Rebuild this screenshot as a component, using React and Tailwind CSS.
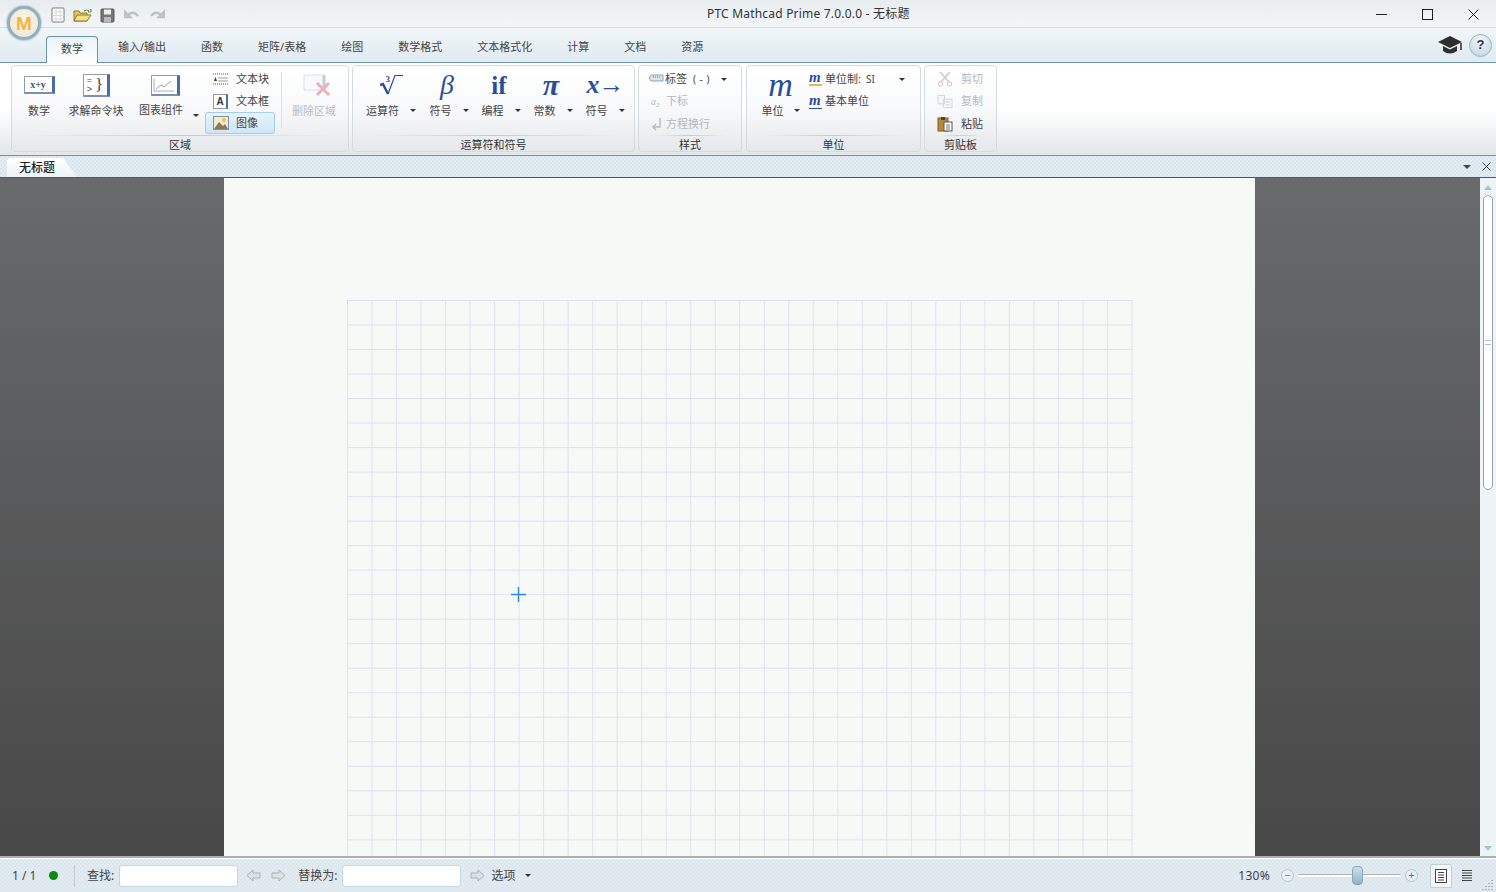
import React from 'react'

const tabs = ['数学', '输入/输出', '函数', '矩阵/表格', '绘图', '数学格式', '文本格式化', '计算', '文档', '资源']

const Caret = ({ color = 'border-t-[#333]' }) => (
    <span className={`inline-block w-0 h-0 border-x-[3px] border-x-transparent border-t-[3px] ${color}`} />
)

/* ribbon group with label at the bottom */
const Group = ({ label, width, children }) => (
    <div className={`${width} h-[87px] flex flex-col rounded-[4px] border border-[#d3dbdf] bg-gradient-to-b from-white via-[#f8f9fa] to-[#e5e9eb]`}>
        <div className="flex-1 flex min-h-0">{children}</div>
        <div className="mx-[16px] h-px bg-gradient-to-r from-transparent via-[#c4ccd0] to-transparent" />
        <div className="h-[15px] text-center text-[11px] leading-[17px] text-[#333]">{label}</div>
    </div>
)

const BigButton = ({ icon, label, caret, iconClass = '', textClass = 'text-[#444]', labelClass = 'gap-[11px]', caretClass = '' }) => (
    <div className="flex flex-col items-center">
        <div className={`h-[32px] flex items-center justify-center ${iconClass}`}>{icon}</div>
        <div className={`h-[18px] flex items-center text-[11px] leading-none whitespace-nowrap ${labelClass} ${textClass}`}>
            <span>{label}</span>
            {caret && <span className={`flex ${caretClass}`}><Caret /></span>}
        </div>
    </div>
)

const SmallRow = ({ icon, label, className = '', iconBox = 'w-[28px]' }) => (
    <div className={`h-[22px] flex items-center text-[11px] whitespace-nowrap ${className}`}>
        <span className={`${iconBox} flex items-center justify-center shrink-0`}>{icon}</span>
        <span>{label}</span>
    </div>
)

const FrameIcon = ({ className, children }) => (
    <div className={`flex items-center justify-center bg-white border border-[#8f9bb0] border-r-[3px] border-r-[#4a6cad] border-b-[2px] border-b-[#7d8fb5] rounded-[1px] ${className}`}>
        {children}
    </div>
)

const MathGlyph = ({ children, className = '' }) => (
    <span className={`font-['Liberation_Serif',serif] text-[#2a4d98] leading-none ${className}`}>{children}</span>
)

const Arrow = ({ flip }) => (
    <svg width="15" height="15" viewBox="0 0 15 15" className={flip ? 'scale-x-[-1]' : ''}>
        <path d="M1 7.5 7 2v3h7v5H7v3z" fill="#dbe2e6" stroke="#a9b3b8" />
    </svg>
)

const App = () => {
    return (
        <div className="relative w-full h-screen overflow-hidden flex flex-col bg-[#e3edf3] text-[#444] font-['Noto_Sans','Noto_Sans_CJK_SC',sans-serif]">

            {/* app logo */}
            <div className="absolute left-[7px] top-[6px] w-[34px] h-[34px] rounded-full border-[3px] border-[#8fb0c2] bg-[radial-gradient(circle_at_50%_40%,#fff6de,#e6e6d8)] flex items-center justify-center shadow-[0_0_2px_#5f7f90] z-20">
                <span className="font-['Liberation_Sans',sans-serif] font-bold text-[19px] leading-none text-[#f3b445]">M</span>
            </div>

            {/* title bar */}
            <div className="h-[28px] shrink-0 flex items-center bg-gradient-to-b from-[#e7ecef] to-[#f3f6f7] border-b border-[#d6dcdf]">
                <div className="w-[707px] pl-[51px] pt-[3px] flex items-center shrink-0">
                    <svg width="14" height="16" viewBox="0 0 14 16" className="mr-[8px]">
                        <rect x="1" y="1" width="12" height="14" rx="1" fill="#fff" stroke="#777" />
                        <path d="M1 5h12M1 8.5h12M1 12h12M5 1v14M9 1v14" stroke="#d5dadd" />
                    </svg>
                    <svg width="19" height="15" viewBox="0 0 19 15" className="mr-[8px]">
                        <path d="M1 3h5l1 2h7v8H1z" fill="#e7c65e" stroke="#8d7a35" />
                        <path d="M1 13 4 7h14l-4 6z" fill="#f7df85" stroke="#8d7a35" />
                        <path d="M11 3q3-2 5 0l-1 1h3V1l-1 1" fill="none" stroke="#5f8f35" />
                    </svg>
                    <svg width="15" height="15" viewBox="0 0 15 15" className="mr-[9px]">
                        <rect x="1" y="1" width="13" height="13" rx="1" fill="#777" stroke="#555" />
                        <rect x="4" y="1.5" width="7" height="5" fill="#eee" />
                        <rect x="4" y="9" width="7" height="5" fill="#bbb" />
                    </svg>
                    <svg width="16" height="12" viewBox="0 0 16 12" className="mr-[9px]">
                        <path d="M4 6q5-5 10 1M1 3v5h5z" fill="none" stroke="#bcc2c5" strokeWidth="2.5" />
                    </svg>
                    <svg width="16" height="12" viewBox="0 0 16 12" className="scale-x-[-1]">
                        <path d="M4 6q5-5 10 1M1 3v5h5z" fill="none" stroke="#bcc2c5" strokeWidth="2.5" />
                    </svg>
                </div>
                <div className="text-[12px] text-[#333] whitespace-nowrap tracking-[0.2px]">PTC Mathcad Prime 7.0.0.0 - 无标题</div>
                <div className="flex-1" />
                <div className="flex items-center pr-[17px] pt-px gap-[35px]">
                    <svg width="11" height="11" viewBox="0 0 11 11"><path d="M0 5.5h11" stroke="#222" /></svg>
                    <svg width="11" height="11" viewBox="0 0 11 11"><rect x=".5" y=".5" width="10" height="10" fill="none" stroke="#222" /></svg>
                    <svg width="11" height="11" viewBox="0 0 11 11"><path d="M.5.5l10 10M10.5.5l-10 10" stroke="#222" /></svg>
                </div>
            </div>

            {/* tab row */}
            <div className="h-[35px] shrink-0 flex items-end pl-[46px] gap-[5px] bg-gradient-to-b from-[#f1f6f8] to-[#dfeaf1] border-b border-[#6f93ab]">
                {tabs.map((tab, index) => (
                    <div
                        key={tab}
                        className={`h-[27px] text-[11px] leading-[24px] whitespace-nowrap text-[#444] ${index === 0 ? 'w-[52px] text-center -mb-px bg-gradient-to-b from-[#eaf2f6] to-white border border-b-0 border-[#6f93ab] rounded-t-[4px]' : 'px-[15px]'}`}
                    >
                        {tab}
                    </div>
                ))}
                <div className="flex-1" />
                <div className="self-center flex items-center pr-[4px] gap-[6px]">
                    <svg width="26" height="22" viewBox="0 0 26 22">
                        <path d="M13 2 25 8l-12 6L1 8z" fill="#2e2e2e" />
                        <path d="M6 12v5q7 5 14 0v-5l-7 3.5z" fill="#2e2e2e" />
                        <path d="M24 9v7" stroke="#2e2e2e" strokeWidth="1.5" />
                    </svg>
                    <div className="w-[23px] h-[23px] rounded-full border border-[#9db3c0] bg-[radial-gradient(circle_at_50%_30%,#f4f8fa,#bcd2df)] flex items-center justify-center font-['Liberation_Sans',sans-serif] font-bold text-[13px] text-[#334]">?</div>
                </div>
            </div>

            {/* ribbon */}
            <div className="h-[92px] shrink-0 flex pl-[11px] pt-[2px] gap-[3px] bg-gradient-to-b from-white via-white to-[#e2e7ea]">
                <Group label="区域" width="w-[338px]">
                    <div className="flex pl-[12px] pt-[3px]">
                        <div className="w-[30px] mr-[14px]">
                            <BigButton icon={<FrameIcon className="w-[31px] h-[18px] font-['Liberation_Serif',serif] font-bold text-[10px] text-[#555]">x+y</FrameIcon>} label="数学" />
                        </div>
                        <div className="w-[56px] mr-[14px]">
                            <BigButton
                                icon={
                                    <FrameIcon className="w-[27px] h-[23px] gap-[3px] font-['Liberation_Sans',sans-serif] text-[#444]">
                                        <span className="flex flex-col text-[9px] leading-[9px]"><span>=</span><span>&gt;</span></span>
                                        <span className="font-['Liberation_Serif',serif] text-[17px] leading-none">{'}'}</span>
                                    </FrameIcon>
                                }
                                label="求解命令块"
                            />
                        </div>
                        <div className="w-[62px]">
                            <BigButton
                                iconClass="pr-[8px]"
                                icon={<FrameIcon className="w-[29px] h-[21px]"><svg width="22" height="14" viewBox="0 0 22 14"><path d="M1 1v12h20" fill="none" stroke="#a8afb5" /><path d="M3 11l5-4 3 2 7-6" fill="none" stroke="#9aa3aa" /></svg></FrameIcon>}
                                label="图表组件"
                                caret
                                labelClass="gap-[10px] -mt-[1px]"
                                caretClass="translate-y-[6px]"
                            />
                        </div>
                        <div className="ml-[5px] -mt-[1px] w-[70px] flex flex-col">
                            <SmallRow
                                iconBox="w-[31px]"
                                icon={<svg width="16" height="12" viewBox="0 0 16 12"><path d="M0 1h16M0 11h16" stroke="#555" strokeDasharray="1 1" /><path d="M5 5h10M5 8h10" stroke="#999" /><path d="M1 8l1.5-4L4 8z" fill="#333" /></svg>}
                                label="文本块"
                            />
                            <SmallRow
                                iconBox="w-[31px]"
                                icon={<span className="w-[15px] h-[15px] bg-white border border-[#8f9bb0] border-r-[2px] border-r-[#4a6cad] flex items-center justify-center font-['Liberation_Sans',sans-serif] font-bold text-[10px] text-[#333]">A</span>}
                                label="文本框"
                            />
                            <SmallRow
                                className="rounded-[3px] border border-[#a8cde8] bg-gradient-to-b from-[#e6f3fc] to-[#cfe6f7]"
                                iconBox="w-[30px]"
                                icon={<svg width="16" height="14" viewBox="0 0 16 14"><rect x=".5" y=".5" width="15" height="13" fill="#f3ead0" stroke="#7d8fb5" /><circle cx="11" cy="4" r="2" fill="#f2c53d" /><path d="M1 13l5-7 4 4 2-2 3 5z" fill="#8a7a5a" /></svg>}
                                label="图像"
                            />
                        </div>
                        <div className="ml-[6px] mt-[3px] w-px h-[56px] bg-[#dde1e3]" />
                        <div className="ml-[10px] w-[44px]">
                            <BigButton
                                textClass="text-[#b9bdc0]"
                                iconClass="pl-[6px]"
                                icon={<svg width="28" height="24" viewBox="0 0 28 24"><path d="M1 2h20v15H1z" fill="#f8f9fa" stroke="#dde0e4" /><path d="M21 2v15" stroke="#c4cbe0" strokeWidth="3" /><path d="M14 10l12 12M26 10 14 22" stroke="#eeb0b8" strokeWidth="3" /></svg>}
                                label="删除区域"
                            />
                        </div>
                    </div>
                </Group>

                <Group label="运算符和符号" width="w-[283px]">
                    <div className="flex pl-[13px] pt-[3px] gap-[14px]">
                        <div className="w-[50px]">
                            <BigButton
                                icon={
                                    <span className="relative flex items-center">
                                        <svg width="23" height="22" viewBox="0 0 23 22">
                                            <path d="M0 11l3-1 5 10" fill="none" stroke="#2a4d98" strokeWidth="2.4" />
                                            <path d="M8 20 15 1.5h8" fill="none" stroke="#2a4d98" strokeWidth="1.2" />
                                        </svg>
                                        <span className="absolute left-[6px] top-[1px] font-['Liberation_Serif',serif] text-[#2a4d98] text-[9px] leading-none font-bold">3</span>
                                    </span>
                                }
                                label="运算符"
                                caret
                            />
                        </div>
                        <div className="w-[38px]"><BigButton iconClass="pr-[4px]" icon={<MathGlyph className="text-[28px] italic">β</MathGlyph>} label="符号" caret /></div>
                        <div className="w-[38px]"><BigButton iconClass="pr-[4px]" icon={<MathGlyph className="text-[25px] font-bold">if</MathGlyph>} label="编程" caret /></div>
                        <div className="w-[38px]"><BigButton iconClass="pr-[4px]" icon={<MathGlyph className="text-[30px] font-bold italic">π</MathGlyph>} label="常数" caret /></div>
                        <div className="w-[38px]"><BigButton icon={<MathGlyph className="text-[26px] font-bold italic whitespace-nowrap tracking-[-1px]">x→</MathGlyph>} label="符号" caret /></div>
                    </div>
                </Group>

                <Group label="样式" width="w-[104px]">
                    <div className="flex flex-col gap-[0.5px] pt-[2px] w-full">
                        <div className="h-[22px] flex items-center pl-[9px] text-[11px] whitespace-nowrap">
                            <svg width="16" height="10" viewBox="0 0 16 10"><path d="M3 1h12v6H3L1 4z" fill="#dbe5ee" stroke="#8fa3b5" /><path d="M5 3h8" stroke="#667" strokeDasharray="1 1" /></svg>
                            <span className="ml-px">标签</span>
                            <span className="ml-[6px] text-[10px] tracking-[0.5px]">( - )</span>
                            <span className="ml-[11px] flex"><Caret /></span>
                        </div>
                        <div className="h-[22px] flex items-center pl-[12px] text-[11px] text-[#b5b9bc] whitespace-nowrap">
                            <span className="w-[15px] font-['Liberation_Serif',serif] italic text-[10px]">a<sub className="text-[7px] not-italic">2</sub></span>
                            <span>下标</span>
                        </div>
                        <div className="h-[22px] flex items-center pl-[12px] text-[11px] text-[#b5b9bc] whitespace-nowrap">
                            <svg width="15" height="14" viewBox="0 0 15 14" className="shrink-0"><path d="M9 1v9H2M5 7l-3 3 3 3" fill="none" stroke="#b5b9bc" strokeWidth="1.4" /></svg>
                            <span>方程换行</span>
                        </div>
                    </div>
                </Group>

                <div className="ml-px">
                    <Group label="单位" width="w-[175px]">
                        <div className="flex pt-[3px] pl-[14px] w-full">
                            <div className="w-[39px]"><BigButton icon={<MathGlyph className="text-[34px] italic">m</MathGlyph>} label="单位" caret labelClass="gap-[10px]" /></div>
                            <div className="ml-[9px] -mt-[1px] flex flex-col gap-[0.5px] flex-1">
                                <div className="h-[22px] flex items-center text-[11px] whitespace-nowrap">
                                    <span className="w-[13px] mr-[3px] border-b-2 border-[#dcb860] h-[14px] font-['Liberation_Serif',serif] italic font-bold text-[15px] leading-[10px] text-[#2a4d98]">m</span>
                                    <span>单位制:</span>
                                    <span className="ml-[5px] text-[10px]">SI</span>
                                    <span className="ml-[24px] flex"><Caret /></span>
                                </div>
                                <div className="h-[22px] flex items-center text-[11px] whitespace-nowrap">
                                    <span className="w-[13px] mr-[3px] border-b border-[#2a4d98] h-[14px] font-['Liberation_Serif',serif] italic font-bold text-[15px] leading-[10px] text-[#2a4d98]">m</span>
                                    <span>基本单位</span>
                                </div>
                            </div>
                        </div>
                    </Group>
                </div>

                <Group label="剪贴板" width="w-[73px]">
                    <div className="flex flex-col gap-[0.5px] pt-[2px] pl-[11px] w-full">
                        <SmallRow
                            iconBox="w-[25px]"
                            className="text-[#b5b9bc]"
                            icon={<svg width="16" height="16" viewBox="0 0 16 16" className="mr-[8px]"><path d="M3 1l9 10M13 1 4 11" stroke="#c9cdd0" strokeWidth="1.6" /><circle cx="3.5" cy="13" r="2.2" fill="none" stroke="#e8b8b8" /><circle cx="12.5" cy="13" r="2.2" fill="none" stroke="#e8b8b8" /></svg>}
                            label="剪切"
                        />
                        <SmallRow
                            iconBox="w-[25px]"
                            className="text-[#b5b9bc]"
                            icon={<svg width="16" height="15" viewBox="0 0 17 15" className="mr-[8px]"><path d="M1 1h7v9H1zM7 5h9v9H7z" fill="#f6f7f8" stroke="#d0d4d7" /><path d="M9 8h5M9 11h5" stroke="#d0d4d7" /></svg>}
                            label="复制"
                        />
                        <SmallRow
                            iconBox="w-[25px]"
                            icon={<svg width="16" height="16" viewBox="0 0 16 16" className="mr-[8px]"><rect x="1" y="2" width="10" height="13" fill="#b68a3a" stroke="#7d5d22" /><rect x="4" y="1" width="4" height="3" fill="#444" /><rect x="7" y="6" width="8" height="9" fill="#fff" stroke="#555" /><path d="M9 9h4M9 11h4M9 13h4" stroke="#777" /></svg>}
                            label="粘贴"
                        />
                    </div>
                </Group>
            </div>

            {/* document tab strip */}
            <div className="h-[22px] shrink-0 flex items-end pl-[7px] pr-[5px] border-t border-[#6f93ab] bg-[#dfe9f0] bg-[repeating-conic-gradient(#e4edf3_0_25%,#d9e5ec_0_50%)] bg-[size:4px_4px]">
                <div className="h-[19px] w-[70px] pl-[12px] bg-gradient-to-b from-white to-[#eef3f6] rounded-tl-[4px] [clip-path:polygon(0_0,80%_0,100%_100%,0_100%)] text-[12px] leading-[19px] font-medium text-[#222]">无标题</div>
                <div className="flex-1" />
                <div className="self-center flex items-center gap-[11px]">
                    <span className="inline-block w-0 h-0 border-x-[4px] border-x-transparent border-t-[4px] border-t-[#445]" />
                    <svg width="9" height="9" viewBox="0 0 9 9"><path d="M.5.5l8 8M8.5.5l-8 8" stroke="#445" /></svg>
                </div>
            </div>

            {/* workspace */}
            <div className="flex-1 min-h-0 flex border-t border-[#555] border-b-2 border-b-[#a9afb2]">
                <div className="flex-1 min-w-0 pl-[224px] bg-gradient-to-b from-[#696a6c] to-[#484848]">
                    <div className="w-[1031px] h-full pt-[122px] pl-[123px] bg-[#f5faf6] overflow-hidden">
                        <div className="relative w-[786px] h-full bg-[linear-gradient(to_right,#dce2f3_1px,transparent_1px),linear-gradient(to_bottom,#dce2f3_1px,transparent_1px)] bg-[size:24.53px_24.53px]">
                            {/* crosshair cursor */}
                            <svg width="15" height="15" viewBox="0 0 15 15" className="absolute left-[164px] top-[287px]">
                                <path d="M7.5 0v15M0 7.5h15" stroke="#2a8ad8" strokeWidth="1.4" />
                            </svg>
                        </div>
                    </div>
                </div>

                {/* scrollbar */}
                <div className="w-[16px] shrink-0 flex flex-col items-center bg-[#eef3f5]">
                    <span className="mt-[7px] w-0 h-0 border-x-[4px] border-x-transparent border-b-[5px] border-b-[#a3c9c6]" />
                    <div className="mt-[5px] w-[10px] h-[295px] rounded-full border border-[#9aa8ae] bg-white flex items-center justify-center">
                        <span className="w-[6px] h-[5px] border-y border-[#b4bdc2]" />
                    </div>
                    <div className="flex-1" />
                    <span className="mb-[5px] w-0 h-0 border-x-[4px] border-x-transparent border-t-[5px] border-t-[#a3c9c6]" />
                </div>
            </div>

            {/* status bar */}
            <div className="h-[34px] shrink-0 flex items-center pl-[12px] border-t border-white bg-[#dfe9f0] bg-[repeating-conic-gradient(#e3ecf2_0_25%,#dbe6ed_0_50%)] bg-[size:4px_4px] text-[12px] text-[#444]">
                <span className="w-[24px] whitespace-nowrap">1 / 1</span>
                <span className="ml-[13px] w-[9px] h-[9px] rounded-full bg-[#0e8a14]" />
                <span className="ml-[16px] w-px h-[22px] bg-[#c3ccd1]" />
                <span className="ml-[12px]">查找:</span>
                <div className="ml-[5px] w-[119px] h-[22px] rounded-[3px] border border-[#c2d6e4] bg-white" />
                <div className="ml-[8px] flex gap-[10px]"><Arrow /><Arrow flip /></div>
                <span className="ml-[12px]">替换为:</span>
                <div className="ml-[5px] w-[119px] h-[22px] rounded-[3px] border border-[#c2d6e4] bg-white" />
                <div className="ml-[9px]"><Arrow flip /></div>
                <span className="ml-[6px]">选项</span>
                <span className="ml-[10px] flex"><Caret /></span>
                <div className="flex-1" />
                <span className="tracking-[0.3px]">130%</span>
                <span className="ml-[11px] w-[13px] h-[13px] rounded-full border border-[#b4c6d2] bg-[#e8f0f5] text-[#5a7f9f] text-[11px] leading-[10px] text-center">−</span>
                <div className="relative ml-[4px] w-[103px] h-[3px] rounded-full bg-white border-t border-[#a9b4ba]">
                    <span className="absolute left-[54px] -top-[9px] w-[11px] h-[19px] rounded-[4px] border border-[#8aa5b8] bg-gradient-to-b from-[#cfe0ec] to-[#8fb3cd]" />
                </div>
                <span className="ml-[4px] w-[13px] h-[13px] rounded-full border border-[#b4c6d2] bg-[#e8f0f5] text-[#4a74a8] text-[11px] leading-[10px] text-center">+</span>
                <div className="ml-[12px] w-[22px] h-[24px] border border-[#c4ced4] rounded-t-[2px] bg-[#f3f7f9] flex items-center justify-center">
                    <svg width="12" height="14" viewBox="0 0 12 14"><rect x=".5" y=".5" width="11" height="13" fill="#fff" stroke="#444" /><path d="M3 3.5h6M3 6h6M3 8.5h6M3 11h6" stroke="#444" /></svg>
                </div>
                <div className="ml-[3px] w-[23px] h-[24px] flex items-center justify-center">
                    <svg width="12" height="14" viewBox="0 0 12 14"><path d="M1 1.5h10M1 4h10M1 6.5h10M1 9h10M1 11.5h10" stroke="#444" /></svg>
                </div>
                <svg width="12" height="12" viewBox="0 0 12 12" className="ml-[4px] mr-[2px] self-end mb-[2px]">
                    <path d="M10 2v1M7 5v1M10 5v1M4 8v1M7 8v1M10 8v1M1 11v1M4 11v1M7 11v1M10 11v1" stroke="#6f7a80" />
                </svg>
            </div>
        </div>
    )
}

export default App
